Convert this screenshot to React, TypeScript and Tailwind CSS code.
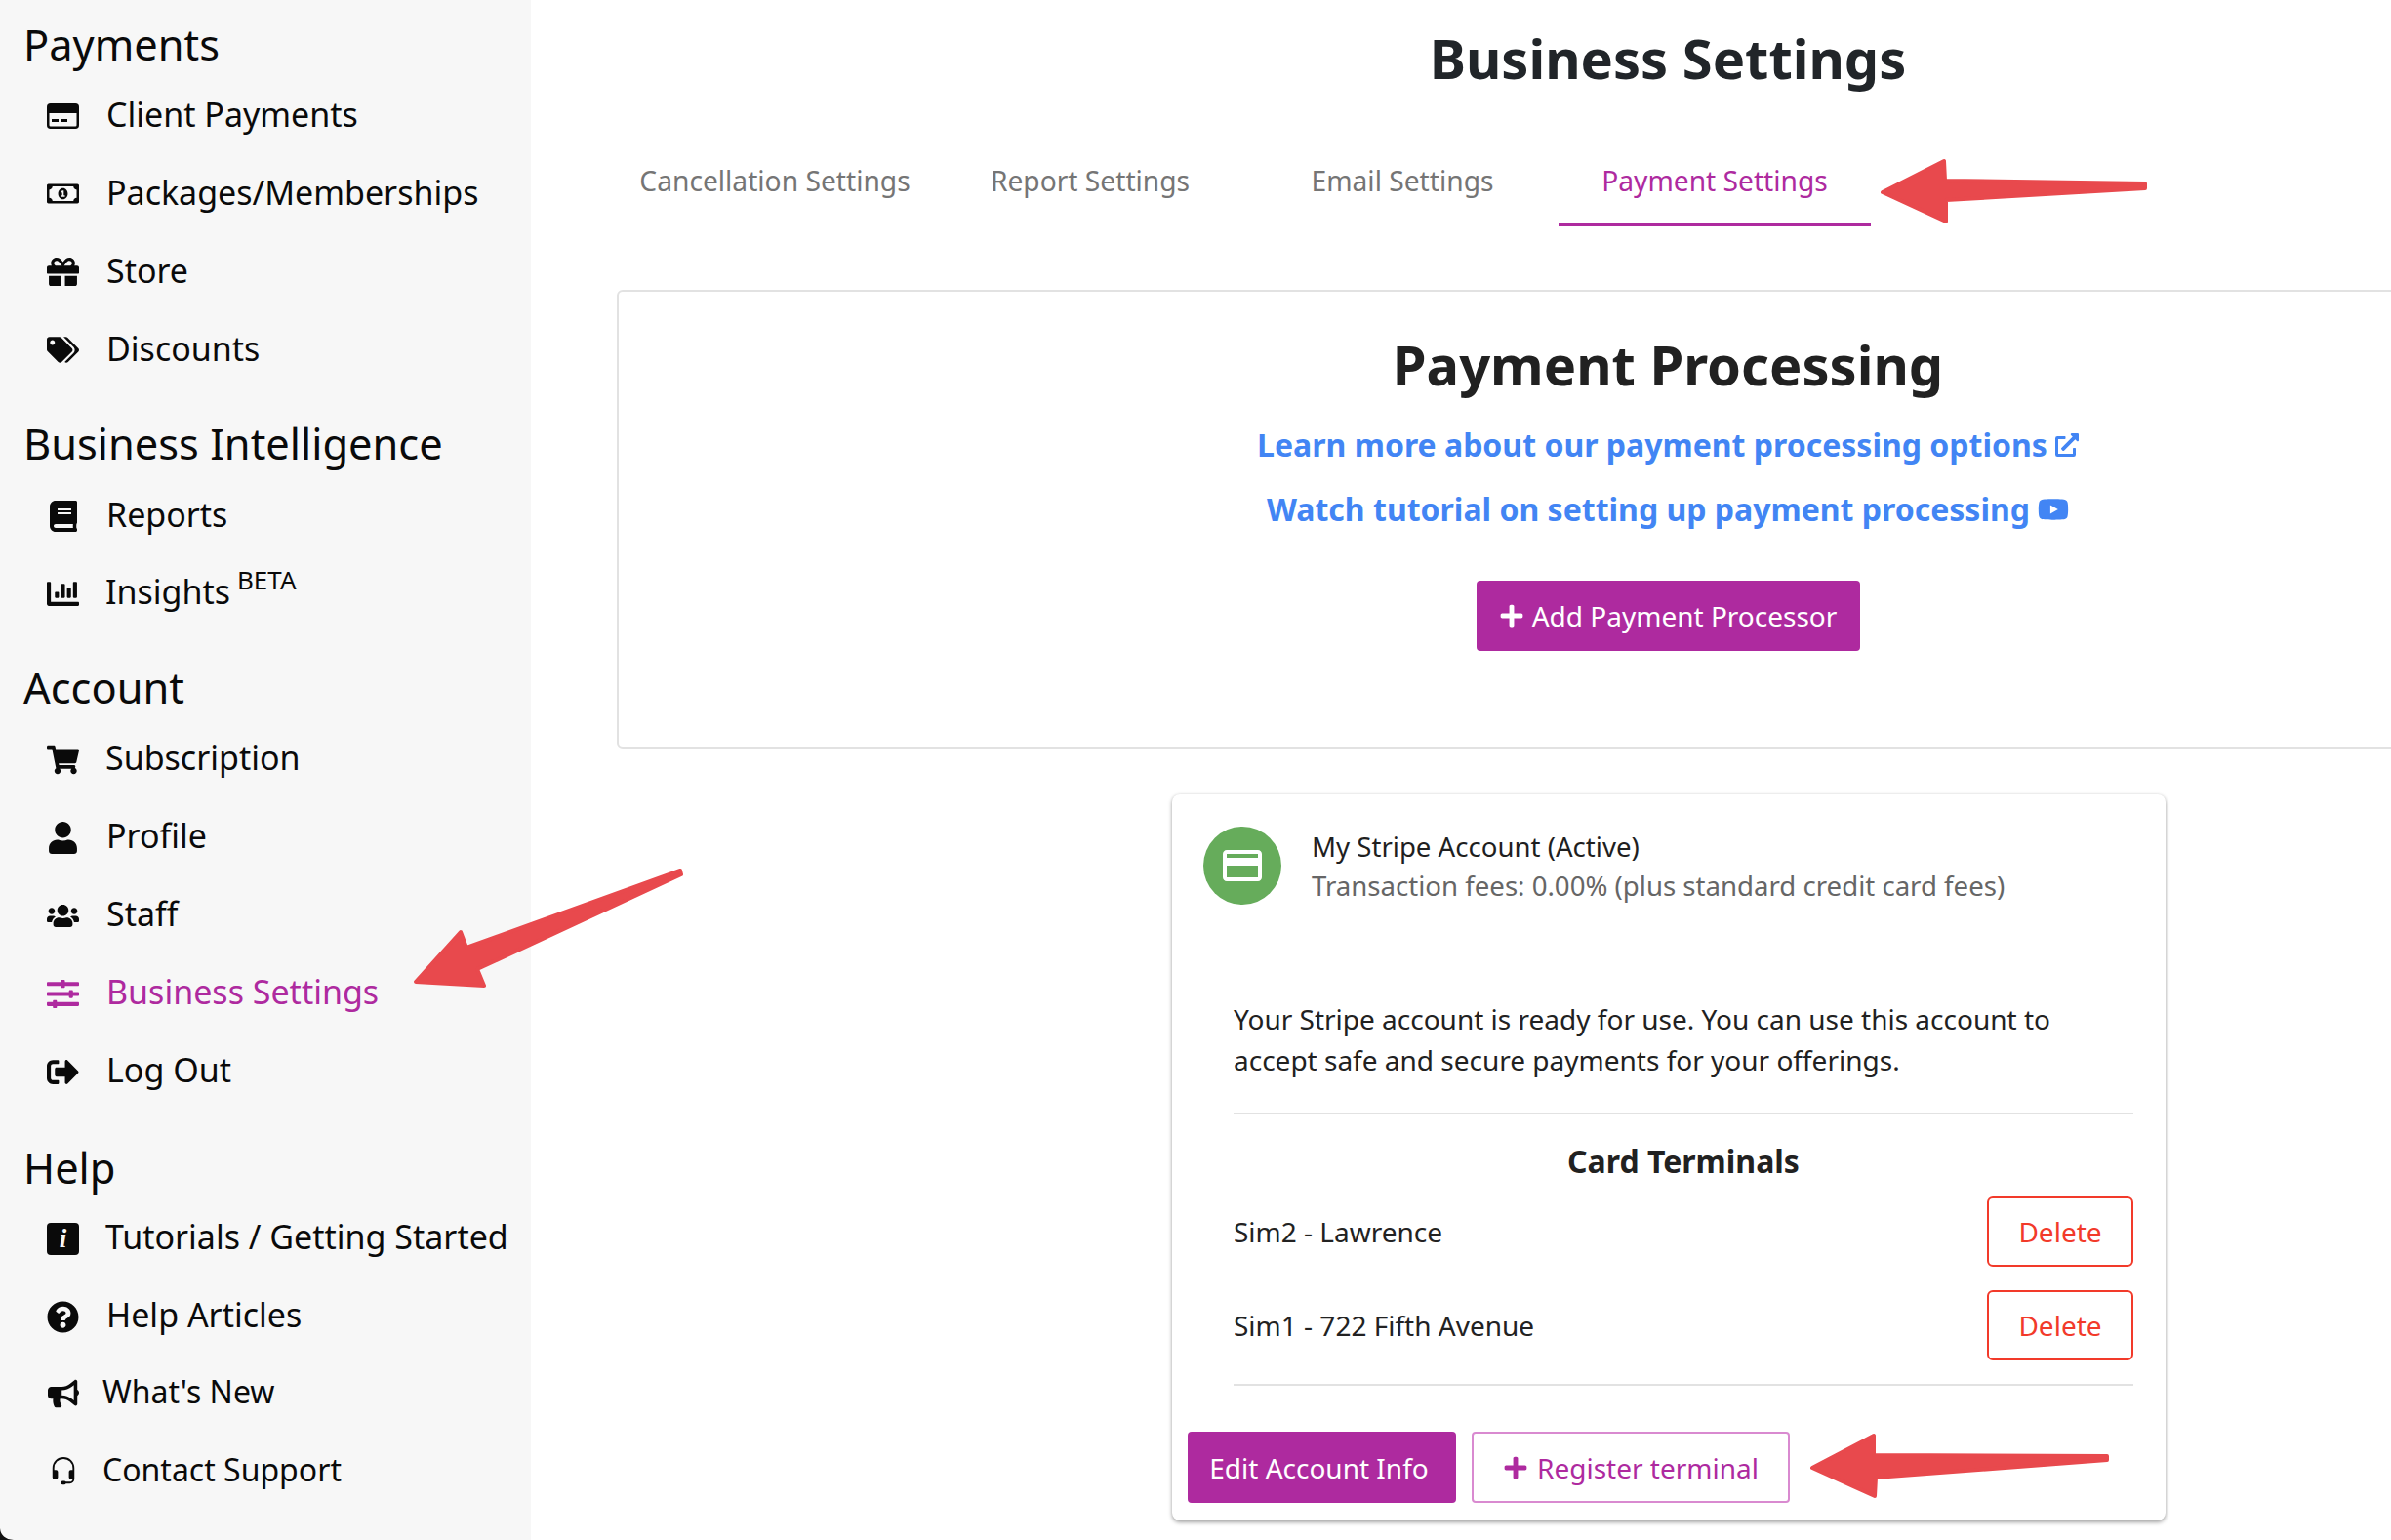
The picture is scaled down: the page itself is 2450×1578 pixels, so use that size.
import React from "react";
import {
  FaRegMoneyBillAlt, FaGift, FaTags, FaBook, FaChartBar, FaShoppingCart, FaUser, FaUsers,
  FaSlidersH, FaSignOutAlt, FaQuestionCircle, FaBullhorn, FaExternalLinkAlt, FaYoutube, FaPlus,
} from "react-icons/fa";
import { BsHeadset } from "react-icons/bs";
import { MdCreditCard } from "react-icons/md";

type ItemProps = { icon: React.ReactNode; label: React.ReactNode; active?: boolean; textClass?: string; sizeClass?: string };

function Item({ icon, label, active, textClass = "ml-[28px]", sizeClass = "text-[34px]" }: ItemProps) {
  return (
    <div className={`flex h-[80px] items-center pl-[48px] ${sizeClass} ${active ? "text-[#ae2a9f]" : "text-[#0a0a0a]"}`}>
      <span className="mt-[3px] flex w-[33px] shrink-0 items-center justify-center">{icon}</span>
      <span className={`whitespace-nowrap ${textClass}`}>{label}</span>
    </div>
  );
}

function Heading({ children, className = "" }: { children: React.ReactNode; className?: string }) {
  return <div className={`flex h-[60px] items-center pl-[24px] text-[43.4px] text-[#0a0a0a] ${className}`}>{children}</div>;
}

function Tab({ children, active, className = "" }: { children: React.ReactNode; active?: boolean; className?: string }) {
  return (
    <div
      className={`flex h-[90px] w-[320px] items-center justify-center border-b-4 text-[28.2px] ${
        active ? "border-[#ae2a9f] text-[#ae2a9f]" : "border-transparent text-[#757575]"
      } ${className}`}
    >
      {children}
    </div>
  );
}

function Terminal({ name }: { name: string }) {
  return (
    <div className="flex h-[72px] items-center justify-between text-[28px] text-[#222222]">
      <span>{name}</span>
      <span className="flex h-[72px] w-[150px] items-center justify-center rounded-[6px] border-2 border-[#f23a2a] text-[#f23a2a]">
        Delete
      </span>
    </div>
  );
}

function CardIcon() {
  return (
    <svg width="33" height="26" viewBox="0 0 33 26" fill="none">
      <rect x="1.25" y="1.25" width="30.5" height="23.5" rx="2.5" stroke="currentColor" strokeWidth="2.5" />
      <rect x="1" y="1" width="31" height="9" fill="currentColor" />
      <rect x="5" y="16" width="7" height="3" fill="currentColor" />
      <rect x="14" y="16" width="7" height="3" fill="currentColor" />
    </svg>
  );
}

export default function App() {
  return (
    <div className="relative flex h-[1578px] w-[2450px] overflow-hidden bg-white font-['Noto_Sans',sans-serif]">
      <aside className="h-full w-[544px] shrink-0 bg-[#f7f7f7] pt-[16px]">
        <Heading>Payments</Heading>
        <div className="h-[1px]" />
        <Item icon={<CardIcon />} label="Client Payments" />
        <Item icon={<FaRegMoneyBillAlt size={33} />} label="Packages/Memberships" />
        <Item icon={<FaGift size={33} />} label="Store" />
        <Item icon={<FaTags size={33} />} label="Discounts" />
        <div className="h-[28px]" />
        <Heading>Business Intelligence</Heading>
        <div className="h-[2px]" />
        <Item icon={<FaBook size={32} />} label="Reports" />
        <Item
          icon={<FaChartBar size={33} />}
          textClass="ml-[27px] -mt-[2px]"
          label={
            <>
              Insights <sup className="relative top-[-2px] -ml-[2px] align-super text-[26px]">BETA</sup>
            </>
          }
        />
        <div className="h-[28px]" />
        <Heading>Account</Heading>
        <div className="h-[1.5px]" />
        <Item icon={<FaShoppingCart size={33} />} label="Subscription" textClass="ml-[27px]" />
        <Item icon={<FaUser size={33} />} label="Profile" />
        <Item icon={<FaUsers size={33} />} label="Staff" />
        <Item icon={<FaSlidersH size={33} />} label="Business Settings" active />
        <Item icon={<FaSignOutAlt size={33} />} label="Log Out" />
        <div className="h-[30px]" />
        <Heading>Help</Heading>
        <div className="h-[1px]" />
        <Item
          icon={
            <span className="flex h-[33px] w-[33px] items-center justify-center rounded-[4px] bg-[#0a0a0a] font-['Liberation_Serif',serif] text-[27px] font-bold italic leading-none text-[#f7f7f7]">
              i
            </span>
          }
          label="Tutorials / Getting Started"
          textClass="ml-[27px]"
        />
        <Item icon={<FaQuestionCircle size={33} />} label="Help Articles" />
        <div className="-mt-[1.5px]" />
        <Item icon={<FaBullhorn size={32} />} label="What's New" textClass="ml-[24px]" sizeClass="text-[32px]" />
        <Item icon={<BsHeadset size={30} />} label="Contact Support" textClass="ml-[24px]" sizeClass="text-[32px]" />
      </aside>

      <main className="min-w-0 flex-1 pl-[88px]">
        <div className="w-[2154px]">
          <h1 className="flex h-[118px] items-center justify-center text-[56px] font-bold text-[#212529]">
            Business Settings
          </h1>
          <div className="flex h-[115px] items-start pl-[2px] pt-[24px]">
            <Tab className="mr-[3px]">Cancellation Settings</Tab>
            <Tab>Report Settings</Tab>
            <Tab>Email Settings</Tab>
            <Tab active>Payment Settings</Tab>
          </div>
          <div className="mt-[64px] flex h-[470px] flex-col items-center rounded-[6px] border-2 border-[#e2e2e2] pt-[38px]">
            <h2 className="text-[56px] font-bold leading-[72px] text-[#212121]">Payment Processing</h2>
            <a className="mt-[25px] flex h-[44px] items-center gap-[8px] text-[32px] font-bold text-[#4285f4]">
              Learn more about our payment processing options <FaExternalLinkAlt size={24} />
            </a>
            <a className="mt-[22px] flex h-[44px] items-center gap-[8px] text-[32px] font-bold text-[#4285f4]">
              Watch tutorial on setting up payment processing <FaYoutube size={32} />
            </a>
            <button className="mt-[51px] flex h-[72px] w-[393px] items-center justify-center gap-[8px] rounded-[4px] bg-[#ae2a9f] text-[28px] text-white">
              <FaPlus size={26} /> Add Payment Processor
            </button>
          </div>

          <div className="ml-[569px] mt-[47px] flex h-[744px] w-[1018px] flex-col rounded-[8px] bg-white px-[16px] shadow-[0_2px_4px_rgba(0,0,0,0.35),0_0_3px_rgba(0,0,0,0.08)]">
            <div className="flex items-center gap-[31px] pl-[16px] pt-[33px]">
              <span className="flex h-[80px] w-[80px] items-center justify-center rounded-full bg-[#66ac5b] text-white">
                <MdCreditCard size={48} />
              </span>
              <div className="text-[27.6px] leading-[40px]">
                <div className="text-[#1f1f1f]">My Stripe Account (Active)</div>
                <div className="text-[#666666]">Transaction fees: 0.00% (plus standard credit card fees)</div>
              </div>
            </div>
            <div className="flex flex-1 flex-col pl-[47px] pr-[17px] pt-[96px]">
              <p className="max-w-[850px] text-[28px] leading-[42px] text-[#212121]">
                Your Stripe account is ready for use. You can use this account to accept safe and secure payments for your offerings.
              </p>
              <div className="mt-[33px] border-t-2 border-[#e2e2e2]" />
              <h3 className="mt-[28px] text-center text-[32px] font-bold leading-[40px] text-[#212121]">Card Terminals</h3>
              <div className="mt-[16px] flex flex-col gap-[24px]">
                <Terminal name="Sim2 - Lawrence" />
                <Terminal name="Sim1 - 722 Fifth Avenue" />
              </div>
              <div className="mt-[24px] border-t-2 border-[#e2e2e2]" />
            </div>
            <div className="flex gap-[16px] pb-[18px]">
              <button className="flex h-[73px] w-[275px] items-center justify-center rounded-[4px] bg-[#ae2a9f] pr-[6px] text-[28px] text-white">
                Edit Account Info
              </button>
              <button className="flex h-[73px] w-[326px] items-center justify-center gap-[9px] rounded-[4px] border-2 border-[#d98ad0] text-[28px] text-[#ae2a9f]">
                <FaPlus size={26} /> Register terminal
              </button>
            </div>
          </div>
        </div>
      </main>

      <svg className="pointer-events-none absolute left-0 top-0" width="2450" height="1578" viewBox="0 0 2450 1578">
        <g fill="#e8494d" stroke="#e8494d" strokeWidth="4" strokeLinejoin="round">
          <path d="M1929 197 L1992 165 L1993 185 L2198 188 L2198 193 L1994 205 L1994 227 Z" />
          <path d="M426 1006 L472 955 L478 971 L697 892 L698 896 L489 993 L496 1010 Z" />
          <path d="M1857 1504 L1920 1471 L1920 1491 L2159 1492 L2159 1496 L1922 1514 L1921 1533 Z" />
        </g>
        <path d="M0 1566 Q1 1577 14 1578 L0 1578 Z" fill="#111111" />
      </svg>
    </div>
  );
}
